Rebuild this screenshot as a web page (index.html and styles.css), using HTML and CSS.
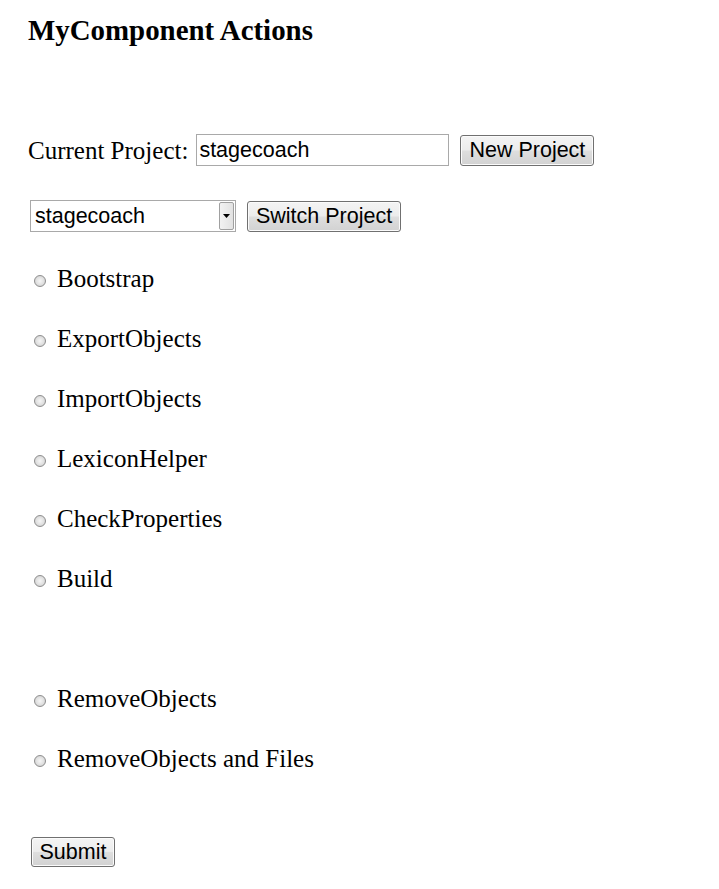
FILE: index.html
```html
<!DOCTYPE html>
<html>
<head>
<meta charset="utf-8">
<title>MyComponent Actions</title>
<link rel="stylesheet" href="styles.css">
</head>
<body>
<div class="page">
  <h1 class="title">MyComponent Actions</h1>
  <form class="form">
    <div class="row row-project">
      <label class="label" for="proj">Current Project:</label>
      <input class="text-input" id="proj" type="text" value="stagecoach">
      <button class="btn btn-new" type="button">New Project</button>
    </div>
    <div class="row row-switch">
      <div class="select-wrap">
        <select class="select"><option>stagecoach</option></select>
        <span class="select-arrow"><svg width="7" height="4" viewBox="0 0 7 4"><path d="M0 0H7L3.5 4Z" fill="#000"/></svg></span>
      </div>
      <button class="btn btn-switch" type="button">Switch Project</button>
    </div>
    <div class="options">
      <label class="option"><input class="radio" type="radio" name="a"><span>Bootstrap</span></label>
      <label class="option"><input class="radio" type="radio" name="a"><span>ExportObjects</span></label>
      <label class="option"><input class="radio" type="radio" name="a"><span>ImportObjects</span></label>
      <label class="option"><input class="radio" type="radio" name="a"><span>LexiconHelper</span></label>
      <label class="option"><input class="radio" type="radio" name="a"><span>CheckProperties</span></label>
      <label class="option"><input class="radio" type="radio" name="a"><span>Build</span></label>
      <div class="option option-empty"></div>
      <label class="option"><input class="radio" type="radio" name="a"><span>RemoveObjects</span></label>
      <label class="option"><input class="radio" type="radio" name="a"><span>RemoveObjects and Files</span></label>
    </div>
    <div class="submit-row">
      <button class="btn btn-submit" type="submit">Submit</button>
    </div>
  </form>
</div>
</body>
</html>
```

FILE: styles.css
```css
html, body {
  margin: 0;
  padding: 0;
  background: #fff;
}
body {
  font-family: "Liberation Serif", "Times New Roman", serif;
  font-size: 25px;
  color: #000;
}
.page {
  padding: 0 0 0 28px;
  display: flex;
  flex-direction: column;
}
.title {
  margin: 14px 0 0 0;
  font-size: 28.9px;
  font-weight: bold;
  line-height: 32px;
}
.form {
  display: flex;
  flex-direction: column;
  margin: 0;
}
.row {
  display: flex;
  align-items: center;
  height: 32px;
}
.row-project {
  margin-top: 88px;
}
.row-switch {
  margin-top: 34px;
}
.label {
  line-height: 32px;
  position: relative;
  top: 1px;
  white-space: nowrap;
}
.text-input {
  box-sizing: border-box;
  width: 253px;
  height: 32px;
  margin: 0 0 0 8px;
  padding: 0 2px;
  border: 1px solid #a9a9a9;
  font-family: "Liberation Sans", Arial, sans-serif;
  font-size: 21.5px;
  color: #000;
  outline: none;
}
.btn {
  box-sizing: border-box;
  height: 31px;
  padding: 0;
  border: 1px solid #707070;
  border-radius: 3px;
  background: linear-gradient(#f4f4f4 0%, #ececec 48%, #dedede 52%, #d2d2d2 100%);
  box-shadow: inset 0 0 0 1px #fbfbfb;
  font-family: "Liberation Sans", Arial, sans-serif;
  font-size: 21.5px;
  line-height: 29px;
  color: #000;
  white-space: nowrap;
}
.btn-new {
  margin-left: 11px;
  width: 134px;
  margin-top: 1px;
}
.select-wrap {
  position: relative;
  margin-left: 2px;
  width: 206px;
  height: 32px;
}
.select {
  box-sizing: border-box;
  appearance: none;
  -webkit-appearance: none;
  width: 206px;
  height: 32px;
  margin: 0;
  padding: 0 0 0 4px;
  border: 1px solid #a9a9a9;
  border-radius: 0;
  background: #fff;
  font-family: "Liberation Sans", Arial, sans-serif;
  font-size: 21.5px;
  color: #000;
}
.select-arrow {
  position: absolute;
  top: 2px;
  right: 2px;
  width: 15px;
  height: 28px;
  box-sizing: border-box;
  border: 1px solid #a0a0a0;
  border-radius: 2px;
  background: linear-gradient(90deg, #f2f2f2, #e2e2e2);
  display: flex;
  align-items: center;
  justify-content: center;
  pointer-events: none;
}
.btn-switch {
  margin-left: 11px;
  width: 154px;
}
.options {
  display: flex;
  flex-direction: column;
  margin-top: 16px;
}
.option {
  display: flex;
  align-items: center;
  height: 60px;
  line-height: 60px;
}
.option span {
  position: relative;
  top: 1px;
}
.radio {
  appearance: none;
  -webkit-appearance: none;
  box-sizing: border-box;
  width: 12px;
  height: 12px;
  margin: 6px 11px 0 6px;
  border: 1px solid #8e8e8e;
  border-radius: 50%;
  background: radial-gradient(circle at 50% 50%, #f6f6f6 0%, #e0e0e0 55%, #c8c8c8 100%);
  flex: none;
}
.submit-row {
  display: flex;
  margin-top: 49px;
}
.btn-submit {
  margin-left: 3px;
  width: 84px;
  height: 30px;
  line-height: 28px;
}
```
